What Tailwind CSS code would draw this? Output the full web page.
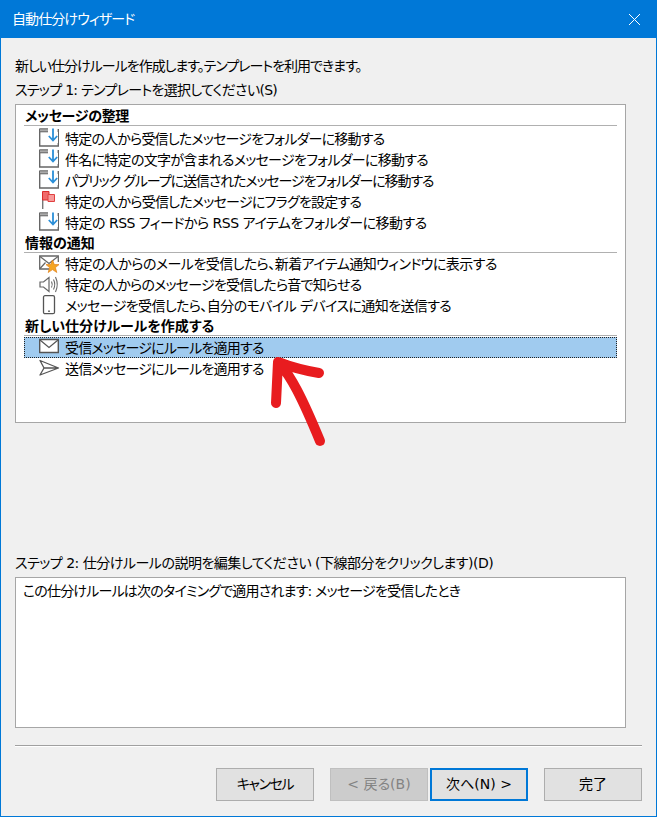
<!DOCTYPE html>
<html lang="ja">
<head>
<meta charset="utf-8">
<script src="https://cdn.jsdelivr.net/npm/@tailwindcss/browser@4"></script>
</head>
<body class="bg-[#f0f0f0]">
<svg width="0" height="0" class="absolute">
  <defs>
    <g id="folder">
      <path d="M0.7 2.7H19.3V18H0.7Z" fill="#fff" stroke="#666" stroke-width="1.4"/>
      <path d="M0.5 0.8H9.5V3.8H0.5Z" fill="#aaa" stroke="#666" stroke-width="1"/>
      <rect x="9" y="0" width="10" height="15" fill="#fff"/>
      <path d="M19.3 1V4" stroke="#666" stroke-width="1.4"/>
      <path d="M14 0.5V12M9.8 8L14 12.5L18.2 8" fill="none" stroke="#2b8fd8" stroke-width="1.8"/>
    </g>
  </defs>
</svg>
<div class="relative w-[657px] h-[817px] overflow-hidden border-x border-b border-[#0078d7] font-['DejaVu_Sans','Noto_Sans_CJK_JP',sans-serif] [font-feature-settings:'palt'] text-[14px] text-black flex flex-col">
  <div class="h-[38px] shrink-0 bg-[#0078d7] text-white flex items-center justify-between pl-[11px] pr-[14px] text-[14px]">
    <span class="tracking-[-0.9px]">自動仕分けウィザード</span>
    <svg width="13" height="13" viewBox="0 0 13 13" class="mr-[1px]"><path d="M1 1L12 12M12 1L1 12" stroke="#fff" stroke-width="1"/></svg>
  </div>
  <div class="flex-1 flex flex-col pl-[14px] pr-[14px]">
    <p class="mt-[17px] h-[22px] leading-[22px] tracking-[-1px]">新しい仕分けルールを作成します。テンプレートを利用できます。</p>
    <p class="mt-[2px] h-[22px] leading-[22px] tracking-[-0.7px]">ステップ 1: テンプレートを選択してください(S)</p>
    <div class="mt-[3px] w-[611px] h-[319px] bg-white border border-[#a6a6a6] pl-[8px] pr-[8px] pt-[1px]">
      <div class="h-[20px] leading-[20px] font-bold border-b border-[#b0b0b0] pl-[1px] tracking-[-0.3px]">メッセージの整理</div>
      <ul class="mt-[2px]">
        <li class="flex items-center h-[21px] pl-[15px]"><svg class="w-[21px] h-[21px] overflow-visible" viewBox="0 0 21 21"><use href="#folder"/></svg><span class="ml-[5px] mt-[2px] tracking-[-0.8px]">特定の人から受信したメッセージをフォルダーに移動する</span></li>
        <li class="flex items-center h-[21px] pl-[15px]"><svg class="w-[21px] h-[21px] overflow-visible" viewBox="0 0 21 21"><use href="#folder"/></svg><span class="ml-[5px] mt-[2px] tracking-[-0.72px]">件名に特定の文字が含まれるメッセージをフォルダーに移動する</span></li>
        <li class="flex items-center h-[21px] pl-[15px]"><svg class="w-[21px] h-[21px] overflow-visible" viewBox="0 0 21 21"><use href="#folder"/></svg><span class="ml-[5px] mt-[2px] tracking-[-1.1px]">パブリック グループに送信されたメッセージをフォルダーに移動する</span></li>
        <li class="flex items-center h-[21px] pl-[15px]"><svg class="w-[21px] h-[21px] overflow-visible" viewBox="0 0 21 21"><path d="M3.7 1V18" stroke="#777" stroke-width="1.4"/><path d="M3.5 0.5H10V9H3.5Z" fill="#f06a6a" stroke="#d92b2b"/><path d="M9 3.5H15.5V10.5H9Z" fill="#f79a9a" stroke="#e04040"/></svg><span class="ml-[5px] mt-[2px] tracking-[-0.75px]">特定の人から受信したメッセージにフラグを設定する</span></li>
        <li class="flex items-center h-[21px] pl-[15px]"><svg class="w-[21px] h-[21px] overflow-visible" viewBox="0 0 21 21"><use href="#folder"/></svg><span class="ml-[5px] mt-[2px] tracking-[-0.5px]">特定の RSS フィードから RSS アイテムをフォルダーに移動する</span></li>
      </ul>
      <div class="h-[20px] leading-[20px] font-bold border-b border-[#b0b0b0] pl-[1px]">情報の通知</div>
      <ul>
        <li class="flex items-center h-[21px] pl-[15px]"><svg class="w-[21px] h-[21px] overflow-visible" viewBox="0 0 21 21"><path d="M10 16H0.7V3H19.3V9" fill="#fff" stroke="#666" stroke-width="1.3"/><path d="M1 3.5L10 10.5L19 3.5M1 15.5L6.5 9.5" fill="none" stroke="#666" stroke-width="1.2"/><path d="M13.5 7L15.3 11.6H20L16.4 14.6L17.8 19.5L13.5 16.6L9.2 19.5L10.6 14.6L7 11.6H11.7Z" fill="#f5a623" stroke="#e0801a" stroke-width=".7"/></svg><span class="ml-[5px] mt-[2px] tracking-[-0.55px]">特定の人からのメールを受信したら、新着アイテム通知ウィンドウに表示する</span></li>
        <li class="flex items-center h-[21px] pl-[15px]"><svg class="w-[21px] h-[21px] overflow-visible" viewBox="0 0 21 21"><path d="M1 8V13H4.5L10 17.5V3.5L4.5 8Z" fill="#fff" stroke="#666" stroke-width="1.2"/><path d="M12.5 7.5Q14 10.5 12.5 13.5M14.5 5.5Q17 10.5 14.5 15.5M16.5 3Q20 10.5 16.5 18" fill="none" stroke="#666" stroke-width="1.1"/></svg><span class="ml-[5px] mt-[2px] tracking-[-0.8px]">特定の人からのメッセージを受信したら音で知らせる</span></li>
        <li class="flex items-center h-[21px] pl-[15px]"><svg class="w-[21px] h-[21px] overflow-visible" viewBox="0 0 21 21"><rect x="4.5" y="0.7" width="11" height="18" rx="1.5" fill="#fff" stroke="#555" stroke-width="1.3"/><rect x="9" y="15.5" width="2" height="1.4" fill="#666"/></svg><span class="ml-[5px] mt-[2px] tracking-[-0.6px]">メッセージを受信したら、自分のモバイル デバイスに通知を送信する</span></li>
      </ul>
      <div class="h-[20px] leading-[20px] font-bold border-b border-[#b0b0b0] pl-[1px]">新しい仕分けルールを作成する</div>
      <ul class="mt-[1px]">
        <li class="flex items-center h-[21px] pl-[15px] bg-[#a0cbef] outline-1 outline-dotted outline-offset-[-1px] outline-[#222]"><svg class="w-[21px] h-[21px] overflow-visible" viewBox="0 0 21 21"><path d="M0.7 2.5H19.3V15.5H0.7Z" fill="#fff" stroke="#555" stroke-width="1.4"/><path d="M1 3L10 10.5L19 3" fill="none" stroke="#555" stroke-width="1.2"/></svg><span class="ml-[5px] mt-[2px] tracking-[-0.8px]">受信メッセージにルールを適用する</span></li>
        <li class="flex items-center h-[21px] pl-[15px]"><svg class="w-[21px] h-[21px] overflow-visible" viewBox="0 0 21 21"><path d="M1 2.5L19.5 10L1 17L5 10ZM5 10H19.5" fill="#fff" stroke="#555" stroke-width="1.3" stroke-linejoin="round"/></svg><span class="ml-[5px] mt-[2px] tracking-[-0.8px]">送信メッセージにルールを適用する</span></li>
      </ul>
    </div>
    <p class="mt-[129px] h-[22px] leading-[22px] tracking-[-0.5px]">ステップ 2: 仕分けルールの説明を編集してください (下線部分をクリックします)(D)</p>
    <div class="mt-[3px] w-[611px] h-[151px] bg-white border border-[#a6a6a6] px-[7px] py-[2px] leading-[22px] tracking-[-0.8px]">この仕分けルールは次のタイミングで適用されます: メッセージを受信したとき</div>
    <div class="mt-[17px] w-[627px] h-[2px] bg-[#a0a0a0] border-b border-white"></div>
    <div class="mt-[21px] w-[627px] flex justify-end">
      <button class="w-[98px] h-[33px] bg-[#e1e1e1] border border-[#adadad] tracking-[-1.4px]">キャンセル</button>
      <button class="ml-[16px] w-[98px] h-[33px] bg-[#cccccc] border border-[#bfbfbf] text-[#838383]">&lt; 戻る(B)</button>
      <button class="ml-[2px] w-[98px] h-[33px] bg-[#e1e1e1] border-2 border-[#0078d7]">次へ(N) &gt;</button>
      <button class="ml-[16px] w-[98px] h-[33px] bg-[#e1e1e1] border border-[#adadad]">完了</button>
    </div>
  </div>
  <svg class="absolute left-[265px] top-[355px]" width="70" height="95" viewBox="0 0 70 95"><path d="M12 7L10 48M12 7C25 12 35 15 53 18M14 9C25 22 35 40 54 86" fill="none" stroke="#e81c1f" stroke-width="10" stroke-linecap="round" stroke-linejoin="round"/></svg>
</div>
</body>
</html>
